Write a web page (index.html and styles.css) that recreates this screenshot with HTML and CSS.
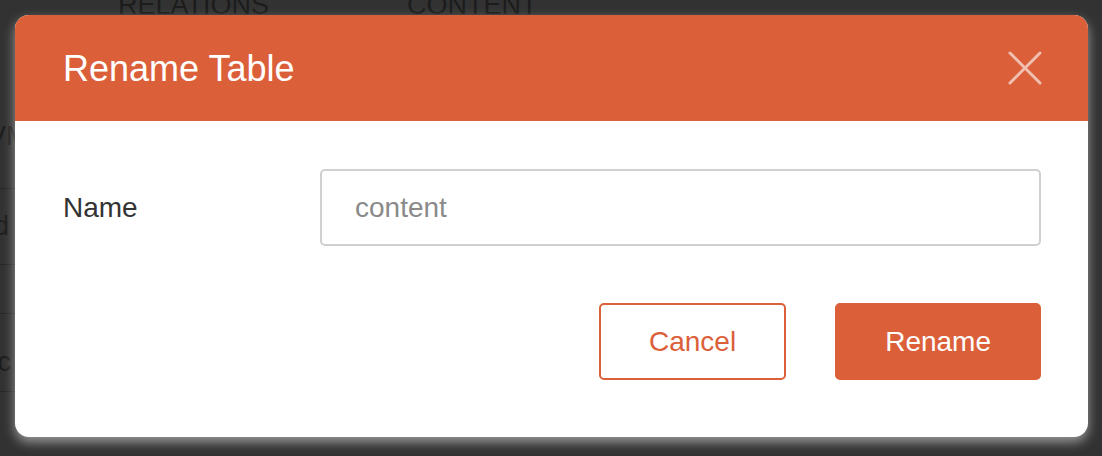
FILE: index.html
```html
<!DOCTYPE html>
<html lang="en">
<head>
<meta charset="utf-8">
<title>Rename Table</title>
<link rel="stylesheet" href="styles.css">
</head>
<body>
<div class="page">
  <div class="tabs">
    <span class="tab tab-relations">RELATIONS</span>
    <span class="tab tab-content">CONTENT</span>
  </div>
  <div class="rows">
    <div class="row row-a"><span>VM</span></div>
    <div class="row row-b"><span>id</span></div>
    <div class="row row-c"><span></span></div>
    <div class="row row-d"><span>tac</span></div>
  </div>
</div>

<div class="modal">
  <div class="modal-header">
    <h1 class="modal-title">Rename Table</h1>
    <button class="close-btn" aria-label="Close">
      <svg width="34" height="34" viewBox="0 0 34 34">
        <path d="M2 2 L32 32 M32 2 L2 32" stroke="rgba(255,255,255,0.6)" stroke-width="3" stroke-linecap="round" fill="none"/>
      </svg>
    </button>
  </div>
  <div class="modal-body">
    <div class="field">
      <label class="field-label" for="name">Name</label>
      <input id="name" class="field-input" type="text" placeholder="content">
    </div>
    <div class="actions">
      <button class="btn btn-outline">Cancel</button>
      <button class="btn btn-primary">Rename</button>
    </div>
  </div>
</div>
</body>
</html>
```

FILE: styles.css
```css
* { box-sizing: border-box; }

html, body {
  margin: 0;
  padding: 0;
  width: 1102px;
  height: 456px;
  overflow: hidden;
  background: #323232;
  font-family: "Liberation Sans", Arial, Helvetica, sans-serif;
}

.page {
  color: #1c1c1c;
  font-size: 27px;
}

.tabs {
  display: flex;
  height: 20px;
  margin-top: -5px;
  padding-left: 118px;
  gap: 138px;
  line-height: 20px;
  overflow: hidden;
}

.rows {
  display: flex;
  flex-direction: column;
  margin-top: 100px;
}

.row {
  display: flex;
  align-items: center;
  border-bottom: 1px solid #262626;
  margin-left: -12px;
  width: 300px;
}

.row-a { height: 74px; padding-bottom: 30px; }
.row-b { height: 76px; }
.row-c { height: 49px; }
.row-d { height: 78px; padding-top: 20px; margin-left: -25px; }

.modal {
  position: absolute;
  left: 15px;
  top: 15px;
  width: 1073px;
  height: 422px;
  border-radius: 14px;
  overflow: hidden;
  background: #ffffff;
  box-shadow: 0 5px 12px rgba(225, 225, 225, 0.6);
  display: flex;
  flex-direction: column;
}

.modal-header {
  height: 106px;
  flex: none;
  background: #db603a;
  display: flex;
  align-items: center;
  justify-content: space-between;
  padding: 0 46px 0 48px;
}

.modal-title {
  margin: 0;
  font-size: 36px;
  font-weight: normal;
  color: #ffffff;
  line-height: 1;
  padding-top: 2px;
}

.close-btn {
  width: 34px;
  height: 34px;
  padding: 0;
  border: none;
  background: none;
  display: flex;
}

.modal-body {
  padding: 48px 47px 57px 48px;
  display: flex;
  flex-direction: column;
}

.field {
  display: grid;
  grid-template-columns: 257px 1fr;
  align-items: center;
}

.field-label {
  font-size: 28px;
  color: #333333;
}

.field-input {
  height: 77px;
  border: 2px solid #d0d0d0;
  border-radius: 5px;
  padding: 0 0 0 33px;
  font-family: inherit;
  font-size: 28px;
  color: #333;
  outline: none;
}

.field-input::placeholder {
  color: #8a8a8a;
}

.actions {
  margin-top: 57px;
  display: flex;
  justify-content: flex-end;
  gap: 49px;
}

.btn {
  height: 77px;
  padding: 0 48px;
  border: 2px solid #db603a;
  border-radius: 5px;
  font-family: inherit;
  font-size: 28px;
  line-height: 1;
}

.btn-outline {
  background: #ffffff;
  color: #db603a;
}

.btn-primary {
  background: #db603a;
  color: #ffffff;
}
```
